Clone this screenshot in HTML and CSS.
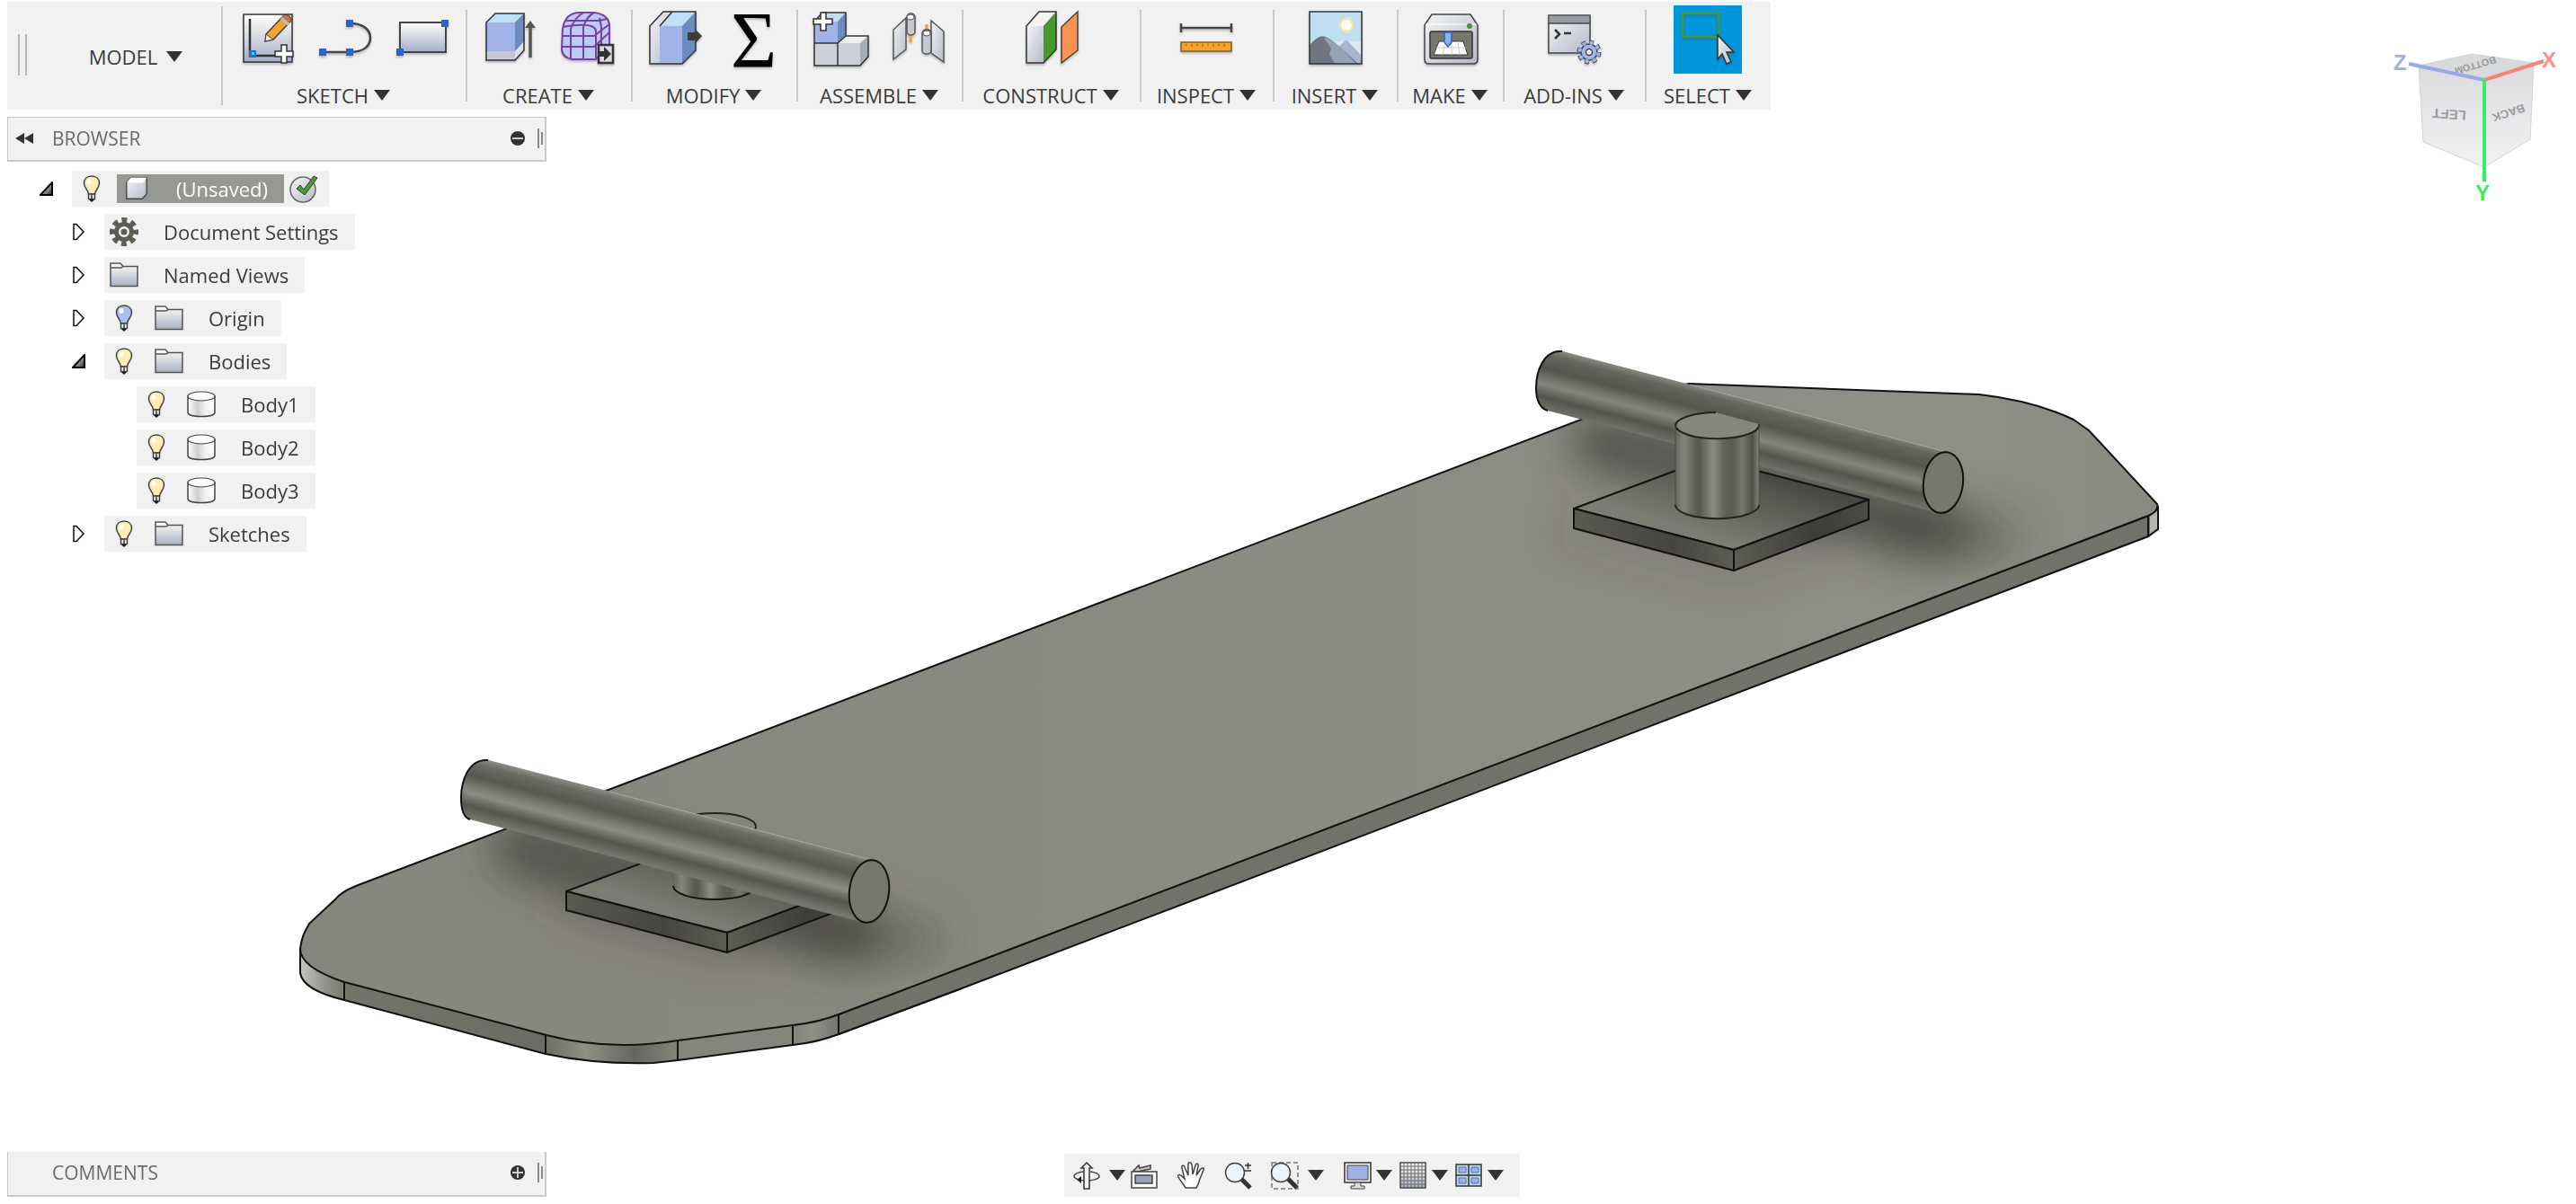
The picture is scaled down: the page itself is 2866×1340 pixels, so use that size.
FILE: index.html
```html
<!DOCTYPE html>
<html lang="en">
<head>
<meta charset="utf-8">
<title>Untitled - Model workspace</title>
<link rel="stylesheet" href="styles.css">
</head>
<body>
<svg class="defs" width="0" height="0" aria-hidden="true">
  <defs>
    <linearGradient id="paper" x1="0" y1="0" x2="0" y2="1"><stop offset="0" stop-color="#fff"/><stop offset=".3" stop-color="#e6e7e9"/><stop offset="1" stop-color="#a4afc4"/></linearGradient>
    <linearGradient id="steel" x1="0" y1="0" x2="1" y2="1"><stop offset="0" stop-color="#f4f5f6"/><stop offset="1" stop-color="#b4bac6"/></linearGradient>
    <linearGradient id="drum" x1="0" y1="0" x2="1" y2="0"><stop offset="0" stop-color="#fff"/><stop offset=".35" stop-color="#cfd0d4"/><stop offset=".7" stop-color="#f6f6f7"/><stop offset="1" stop-color="#fff"/></linearGradient>
    <linearGradient id="wedge" x1="0" y1="0" x2="1" y2="1"><stop offset=".3" stop-color="#ddd"/><stop offset="1" stop-color="#222"/></linearGradient>
    <symbol id="caret" viewBox="0 0 18 12"><path d="M0 0H18L9 12Z" fill="#333"/></symbol>
    <symbol id="bulb" viewBox="0 0 20 32">
      <path d="M10 2C4.500 2 1.500 5.500 1.500 10C1.500 15 6 17 6.500 22H13.500C14 17 18.500 15 18.500 10C18.500 5.500 15.500 2 10 2Z" fill="currentColor" stroke="#444" stroke-width="1.500"/>
      <ellipse cx="7" cy="8" rx="2.500" ry="3" fill="#fff"/>
      <path d="M6.500 22H13.500V27.500H6.500ZM10 22V27" fill="#e8e8ea" stroke="#444" stroke-width="1.500"/>
      <path d="M7 28H13L10 31Z" fill="#111"/>
    </symbol>
    <symbol id="folder" viewBox="0 0 32 28">
      <path d="M1 26.500V1H12L15 4.500H31V26.500Z" fill="url(#paper)" stroke="#555" stroke-width="1.500"/>
      <path d="M1 6H13L15 4.500" fill="none" stroke="#555" stroke-width="1.500"/>
    </symbol>
    <symbol id="body" viewBox="0 0 32 30">
      <path d="M1 6V24C1 27 8 28.500 16 28.500S31 27 31 24V6Z" fill="url(#drum)" stroke="#444" stroke-width="1.500"/>
      <ellipse cx="16" cy="6" rx="15" ry="5" fill="#fff" stroke="#444" stroke-width="1.200"/>
    </symbol>
    <symbol id="open" viewBox="0 0 16 16"><path d="M1 15H14V1Z" fill="url(#wedge)" stroke="#000" stroke-width="2"/></symbol>
    <symbol id="closed" viewBox="0 0 16 20"><path d="M2 1.500H5L13 10L5 18.500H2Z" fill="#fff" stroke="#111" stroke-width="1.500"/></symbol>
  </defs>
</svg>

<main class="viewport">
  <svg class="model" viewBox="0 0 2866 1340" role="img" aria-label="Board with two trucks">
    <defs>
      <linearGradient id="bar1" gradientUnits="userSpaceOnUse" x1="1735" y1="390" x2="1718" y2="456"><stop offset="0" stop-color="#8a8a80"/><stop offset=".12" stop-color="#66655d"/><stop offset=".35" stop-color="#55544d"/><stop offset=".5" stop-color="#74746b"/><stop offset=".6" stop-color="#84857b"/><stop offset=".7" stop-color="#6d6c63"/><stop offset=".8" stop-color="#55544c"/><stop offset="1" stop-color="#727168"/></linearGradient>
      <linearGradient id="bar2" gradientUnits="userSpaceOnUse" x1="540" y1="845" x2="523" y2="911"><stop offset="0" stop-color="#8e8e84"/><stop offset=".12" stop-color="#6b6a62"/><stop offset=".32" stop-color="#585750"/><stop offset=".5" stop-color="#7d7d74"/><stop offset=".6" stop-color="#8b8c82"/><stop offset=".7" stop-color="#6f6e65"/><stop offset=".8" stop-color="#56554d"/><stop offset="1" stop-color="#77766d"/></linearGradient>
      <linearGradient id="post"><stop offset="0" stop-color="#65645c"/><stop offset=".1" stop-color="#84857b"/><stop offset=".28" stop-color="#56554d"/><stop offset=".45" stop-color="#8b8c82"/><stop offset=".58" stop-color="#64635b"/><stop offset=".68" stop-color="#5c5b53"/><stop offset=".8" stop-color="#77776e"/><stop offset=".92" stop-color="#4f4e48"/><stop offset="1" stop-color="#85857b"/></linearGradient>
      <linearGradient id="rim" gradientUnits="userSpaceOnUse" x1="334" y1="0" x2="934" y2="0"><stop offset="0" stop-color="#c4c4c0"/><stop offset=".05" stop-color="#8f8f86"/><stop offset=".09" stop-color="#74736a"/><stop offset=".45" stop-color="#6d6c62"/><stop offset=".53" stop-color="#8f8f85"/><stop offset=".62" stop-color="#67665d"/><stop offset=".7" stop-color="#84847a"/><stop offset=".92" stop-color="#85857b"/><stop offset=".95" stop-color="#8f8f85"/><stop offset="1" stop-color="#75746a"/></linearGradient>
      <linearGradient id="deckTop"><stop offset="0" stop-color="#86867c"/><stop offset=".5" stop-color="#8b8b81"/><stop offset=".9" stop-color="#8f8f85"/><stop offset="1" stop-color="#8a8a80"/></linearGradient>
      <linearGradient id="plateTop" x1="0" y1="1" x2="1" y2="0"><stop offset=".3" stop-color="#7c7c72"/><stop offset=".6" stop-color="#5b5a52"/><stop offset=".8" stop-color="#403f3b"/><stop offset="1" stop-color="#55544d"/></linearGradient>
      <linearGradient id="plateSide"><stop offset="0" stop-color="#5a5952"/><stop offset=".6" stop-color="#45443f"/><stop offset="1" stop-color="#5d5c54"/></linearGradient>
      <linearGradient id="plateSide2"><stop offset="0" stop-color="#5d5c54"/><stop offset=".6" stop-color="#3e3d39"/><stop offset="1" stop-color="#4b4a45"/></linearGradient>
      <filter id="soft" filterUnits="userSpaceOnUse" x="300" y="300" width="2200" height="1000"><feGaussianBlur stdDeviation="24"/></filter>
      <clipPath id="deck"><path d="M334 1056C336 1040 340 1036 344 1028L373 1001Q379 993 396 986L1759 467Q1830 436 1879 427L2202 439Q2263 446 2307 467L2324 479L2400 561Q2402 569 2390 574L1070 1077L933 1129Q910 1138 882 1141L754 1158C700 1167 650 1163 608 1152L383 1093C350 1082 334 1070 334 1056Z"/></clipPath>
    </defs>
    <path d="M334 1056V1083C336 1096 354 1106 383 1113L607 1173Q664 1185 727 1183L754 1180L882 1163Q910 1160 933 1151L1070 1100V1070L608 1120Z" fill="url(#rim)" stroke="#111" stroke-width="2"/>
    <path d="M933 1129L2390 574L2401 565V589L2390 597L1070 1100L933 1151Z" fill="#72716a" stroke="#111" stroke-width="2"/>
    <path d="M334 1056C336 1040 340 1036 344 1028L373 1001Q379 993 396 986L1759 467Q1830 436 1879 427L2202 439Q2263 446 2307 467L2324 479L2400 561Q2402 569 2390 574L1070 1077L933 1129Q910 1138 882 1141L754 1158C700 1167 650 1163 608 1152L383 1093C350 1082 334 1070 334 1056Z" fill="url(#deckTop)" stroke="#111" stroke-width="2"/>
    <path d="M383 1093V1113M607 1152V1173M754 1158V1180M882 1141V1163M933 1129V1151M2390 574V597" fill="none" stroke="#111" stroke-width="2"/>
    <path d="M2392 575L2400 569V588L2392 594Z" fill="#b5b5b0"/>
    <g clip-path="url(#deck)">
      <g filter="url(#soft)" fill="none" stroke="#3e3d38" stroke-linecap="round">
        <path d="M1780 492L2160 590" stroke-width="64" opacity=".75"/>
        <path d="M2110 594L2220 598" stroke-width="56" opacity=".4"/>
        <path d="M580 944L950 1040" stroke-width="64" opacity=".75"/>
        <path d="M910 1046L1025 1046" stroke-width="52" opacity=".35"/>
        <path d="M1751 588L1929 635L2079 578" stroke-width="24" opacity=".3"/>
        <path d="M630 1013L809 1060L959 1004" stroke-width="24" opacity=".3"/>
      </g>
    </g>

    <g stroke="#111" stroke-width="2" stroke-linejoin="round">
      <path d="M1751 566L1901 510L2079 556L1929 612Z" fill="url(#plateTop)"/>
      <path d="M1751 566L1929 612V635L1751 588Z" fill="url(#plateSide)"/>
      <path d="M1929 612L2079 556V578L1929 635Z" fill="url(#plateSide2)"/>
    </g>
    <path d="M1735 390C1717 392 1709 414 1709 432C1709 446 1714 455 1722 457L2157 571L2167 503Z" fill="url(#bar1)"/>
    <path d="M1738 391C1717 389 1709 414 1709 432C1709 446 1714 455 1722 457" fill="none" stroke="#111" stroke-width="2"/>
    <path d="M1880 428L2162 502" stroke="#a3a6ae" stroke-width="1"/>
    <ellipse cx="2162" cy="537" rx="22" ry="34" transform="rotate(7 2162 537)" fill="#77776e" stroke="#111" stroke-width="2"/>
    <path d="M1864 474V562A46 15 0 0 0 1957 562V474Z" fill="url(#post)"/>
    <path d="M1864 474A46 15 0 0 1 1909 459L1957 472A46 15 0 0 1 1864 474Z" fill="#86867b"/>
    <path d="M1909 459A46 15 0 0 0 1864 474A46 15 0 0 0 1957 472M1864 562A46 15 0 0 0 1957 562" fill="none" stroke="#222" stroke-width="2"/>
    <path d="M1864 474V562M1957 472V562" fill="none" stroke="#4a4943" stroke-width="1"/>

    <g stroke="#111" stroke-width="2" stroke-linejoin="round">
      <path d="M630 992L780 936L959 982L809 1038Z" fill="url(#plateTop)"/>
      <path d="M630 992L809 1038V1060L630 1013Z" fill="url(#plateSide)"/>
      <path d="M809 1038L959 982V1004L809 1060Z" fill="url(#plateSide2)"/>
    </g>
    <path d="M749 920V986A46 15 0 0 0 841 986V920Z" fill="url(#post)"/>
    <path d="M749 986A46 15 0 0 0 841 986" fill="none" stroke="#111" stroke-width="2"/>
    <ellipse cx="795" cy="920" rx="46" ry="15" fill="#86867b" stroke="#222" stroke-width="2"/>
    <path d="M540 845C521 848 513 870 513 888C513 902 516 910 523 912L961 1027L972 957Z" fill="url(#bar2)"/>
    <path d="M543 846C521 844 513 870 513 888C513 902 516 910 523 912" fill="none" stroke="#111" stroke-width="2"/>
    <path d="M678 881L966 956" stroke="#a3a6ae" stroke-width="1"/>
    <ellipse cx="967" cy="992" rx="22" ry="35" transform="rotate(7 967 992)" fill="#77776e" stroke="#111" stroke-width="2"/>
  </svg>

  <svg class="viewcube" viewBox="0 0 206 190" role="img" aria-label="View cube">
    <defs>
      <linearGradient id="face" x1="0" y1="0" x2="0" y2="1"><stop offset="0" stop-color="#dcdcdf"/><stop offset="1" stop-color="#f2f2f4"/></linearGradient>
    </defs>
    <g stroke="#d3d3d6" stroke-width="1" stroke-linejoin="round">
      <path d="M41 33L100 20L169 30L114 49Z" fill="#d9dadc"/>
      <path d="M41 33L114 49V146L46 118Z" fill="url(#face)"/>
      <path d="M114 49L169 30L165 115L114 146Z" fill="url(#face)"/>
    </g>
    <g class="cube-text">
      <text x="75" y="88" transform="rotate(184 75 88)" font-size="15" dy="6">LEFT</text>
      <text x="141" y="86" transform="rotate(162 141 86)" font-size="13" dy="5">BACK</text>
      <text x="104" y="33" transform="rotate(164 104 33)" font-size="11" dy="4">BOTTOM</text>
    </g>
    <path d="M114 49L30 31" stroke="#98aae6" stroke-width="4"/>
    <path d="M114 49L180 28" stroke="#f7847c" stroke-width="4"/>
    <path d="M114 48V162" stroke="#35ee62" stroke-width="4"/>
    <g class="axis-text">
      <text x="20" y="38" fill="#9fb1ec">Z</text>
      <text x="186" y="35" fill="#f9958d">X</text>
      <text x="112" y="183" fill="#35ee62">Y</text>
    </g>
  </svg>
</main>

<div class="overlay">
  <header class="toolbar">
    <span class="grip" aria-hidden="true"></span>
    <button class="workspace">MODEL <svg class="caret"><use href="#caret"/></svg></button>
    <section class="group wide">
      <div class="icons">
        <button aria-label="Create sketch"><svg viewBox="0 0 64 64">
          <path d="M7 4H61V57H7Z" fill="url(#paper)" stroke="#333" stroke-width="1.500"/>
          <path d="M14 9V50H44" fill="none" stroke="#333" stroke-width="2.500"/>
          <path d="M13 44H21V52H13Z" fill="#2270d0"/><path d="M16 46h3v3h-3z" fill="#5ac3ff"/>
          <path d="M31 34L32 26L52 5Q59 4 60 11L40 32Z" fill="#f4a32c" stroke="#444" stroke-width="1.500"/>
          <path d="M31 34L32 26L40 32Z" fill="#f8ead8" stroke="#444"/><path d="M49 8L57 15" stroke="#b8bcc4" stroke-width="4"/><path d="M52 5Q59 4 60 11L57 13L50 7Z" fill="#c8733a"/>
          <path d="M49 38H55V45H62V51H55V58H49V51H42V45H49Z" fill="#fff" stroke="#333" stroke-width="1.500"/></svg></button>
        <button aria-label="Line"><svg viewBox="0 0 64 64">
          <path d="M9 46H39C55 46 62 39 62 30S54 14 39 14" fill="none" stroke="#444" stroke-width="2.500"/>
          <path d="M35 10h8v8h-8zM5 42h8v8H5zM35 42h8v8h-8z" fill="#2a66c8"/></svg></button>
        <button aria-label="Rectangle"><svg viewBox="0 0 64 64">
          <path d="M9 13H60V46H9Z" fill="url(#paper)" stroke="#444" stroke-width="2"/>
          <path d="M55 10h8v8h-8zM5 42h8v8H5z" fill="#2a66c8"/></svg></button>
      </div>
      <button class="menu">SKETCH <svg class="caret"><use href="#caret"/></svg></button>
    </section>
    <section class="group">
      <div class="icons">
        <button aria-label="Extrude"><svg viewBox="0 0 64 64">
          <path d="M6 13L16 3H48L38 13Z" fill="#bfe0f5"/><path d="M38 13L48 3V44L38 55Z" fill="#6a8cc0"/><path d="M6 13H38V45H6Z" fill="#a0b2e6"/><path d="M6 45H38V55H6Z" fill="#c3c8d2"/><path d="M38 45L48 34V44L38 55Z" fill="#dcdfe5"/>
          <path d="M6 13L16 3H48V44L38 55H6Z" fill="none" stroke="#333" stroke-width="1.500"/>
          <path d="M55 52V16" stroke="#555" stroke-width="3.500"/><path d="M49 19L55 11L61 19Z" fill="#555"/></svg></button>
        <button aria-label="Create form"><svg viewBox="0 0 64 64">
          <path d="M5 20Q8 2 24 2H40Q56 4 57 16V38L42 54H16Q4 52 4 42Z" fill="#bccbf2"/>
          <path d="M5 20Q8 2 24 2H40Q56 4 57 16V38L42 54H16Q4 52 4 42Z" fill="none" stroke="#7c3fa8" stroke-width="2"/>
          <path d="M4 40H40L57 24M4 28H40L57 15M5 18Q40 12 42 22V54M14 54V20Q18 8 28 2M28 54V18Q32 6 40 2M9 11H46L54 9M48 50V18L46 8" fill="none" stroke="#7c3fa8" stroke-width="2"/>
          <path d="M45 38H61V58H45Z" fill="#d9dadd" stroke="#333" stroke-width="2.500"/><path d="M46 45H51V40L59 48L51 56V51H46Z" fill="#333"/></svg></button>
      </div>
      <button class="menu">CREATE <svg class="caret"><use href="#caret"/></svg></button>
    </section>
    <section class="group">
      <div class="icons">
        <button aria-label="Press pull"><svg viewBox="0 0 64 64">
          <path d="M4 17L19 1H29L15 17V59H4Z" fill="url(#steel)"/><path d="M15 17L29 1H55L40 17Z" fill="#bfe0f5"/><path d="M15 17H40V59H15Z" fill="#a0b2e6"/><path d="M40 17L55 1V44L40 59Z" fill="#6a8cc0"/>
          <path d="M4 17L19 1H55V44L40 59H4ZM15 17L29 1" fill="none" stroke="#333" stroke-width="1.500"/>
          <path d="M46 24H54V20L62 28L54 37V33H46Z" fill="#3c3c3c"/></svg></button>
        <button aria-label="Change parameters"><svg viewBox="0 0 64 64"><text class="sigma" x="8" y="62">Σ</text></svg></button>
      </div>
      <button class="menu">MODIFY <svg class="caret"><use href="#caret"/></svg></button>
    </section>
    <section class="group">
      <div class="icons">
        <button aria-label="New component"><svg viewBox="0 0 64 64">
          <path d="M3 12L12 2H38L29 12Z" fill="#bfe0f5"/><path d="M3 12H29V36H3Z" fill="#a0b2e6"/><path d="M29 12L38 2V28L29 36Z" fill="#6a8cc0"/>
          <path d="M3 36H54V61H3Z" fill="#cdd0d6"/><path d="M29 36L37 28H63L54 36Z" fill="#f0f0f2"/><path d="M54 36L63 28V51L54 61Z" fill="#a9adb8"/>
          <path d="M3 12L12 2H38V28H63V51L54 61H3ZM3 36H29V61M29 36L38 28" fill="none" stroke="#333" stroke-width="1.500"/>
          <path d="M10 2H16V9H23V15H16V22H10V15H2V9H10Z" fill="#fff" stroke="#333" stroke-width="1.500"/></svg></button>
        <button aria-label="Joint"><svg viewBox="0 0 64 64">
          <path d="M24 26V35M42 15V26" stroke="#f4a32c" stroke-width="3"/>
          <g stroke="#555" stroke-width="1.500"><path d="M5 21L19 8V43L5 54Z" fill="url(#steel)"/><path d="M47 11L61 23V57L47 47Z" fill="url(#steel)"/>
          <rect x="20" y="3" width="9" height="24" rx="4" fill="#c3c7cf"/><rect x="37" y="21" width="10" height="27" rx="4" fill="#c3c7cf"/></g>
          <ellipse cx="24" cy="7" rx="4" ry="3" fill="#fff" stroke="#555"/><ellipse cx="42" cy="25" rx="4" ry="3" fill="#fff" stroke="#555"/></svg></button>
      </div>
      <button class="menu">ASSEMBLE <svg class="caret"><use href="#caret"/></svg></button>
    </section>
    <section class="group">
      <div class="icons">
        <button aria-label="Offset plane"><svg viewBox="0 0 64 64">
          <path d="M5 17L19 1H38L24 17Z" fill="#f4f4f5"/><path d="M5 17H24V58H5Z" fill="url(#steel)"/><path d="M24 17L38 1V43L24 58Z" fill="#459a2e"/>
          <path d="M5 17L19 1H38V43L24 58H5Z" fill="none" stroke="#333" stroke-width="1.500"/>
          <path d="M44 18L62 1V44L44 58Z" fill="#fa9352" stroke="#444" stroke-width="1.500"/></svg></button>
      </div>
      <button class="menu">CONSTRUCT <svg class="caret"><use href="#caret"/></svg></button>
    </section>
    <section class="group">
      <div class="icons">
        <button aria-label="Measure"><svg viewBox="0 0 64 64">
          <path d="M4 19H60M4 14V24M60 14V24" stroke="#444" stroke-width="2.500"/>
          <path d="M4 35H60V45H4Z" fill="#f4a32c" stroke="#8a5a1c" stroke-width="1.500"/>
          <path d="M10 37v2M16 37v3M22 37v2M28 37v3M34 37v2M40 37v3M46 37v2M52 37v3" stroke="#8a5a1c"/></svg></button>
      </div>
      <button class="menu">INSPECT <svg class="caret"><use href="#caret"/></svg></button>
    </section>
    <section class="group">
      <div class="icons">
        <button aria-label="Insert image"><svg viewBox="0 0 64 64">
          <path d="M4 1H62V59H4Z" fill="#bfe0f3"/><path d="M4 34H62V59H4Z" fill="#dbe9f4"/><circle cx="45" cy="16" r="7" fill="#fff" stroke="#fbe3a0" stroke-width="2.500"/>
          <path d="M34 42L45 32L62 50V59H40Z" fill="#a9b5cc"/><path d="M4 38Q16 24 24 30Q32 34 58 59H4Z" fill="#6f7682"/><path d="M20 30Q30 30 56 59H32L26 48L28 42Z" fill="#94a2b4"/>
          <path d="M4 1H62V59H4Z" fill="none" stroke="#333" stroke-width="1.500"/></svg></button>
      </div>
      <button class="menu">INSERT <svg class="caret"><use href="#caret"/></svg></button>
    </section>
    <section class="group">
      <div class="icons">
        <button aria-label="3D print"><svg viewBox="0 0 64 64">
          <path d="M4 16L12 4H55L63 16V54Q63 59 58 59H9Q4 59 4 54Z" fill="url(#steel)" stroke="#444" stroke-width="1.500"/>
          <path d="M5 15H62" stroke="#fff"/><circle cx="54" cy="17" r="3" fill="#3e9a2c"/>
          <rect x="10" y="23" width="47" height="30" rx="2" fill="#77776f" stroke="#333" stroke-width="1.500"/>
          <path d="M20 34H47L52 49H14Z" fill="#fff" stroke="#333"/><path d="M17 41H50M27 34L24 49M34 34V49M41 34L43 49" stroke="#ccc"/>
          <path d="M26 24H34V35L30 40L26 35Z" fill="#8fb0ea" stroke="#2a66c8" stroke-width="1.500"/></svg></button>
      </div>
      <button class="menu">MAKE <svg class="caret"><use href="#caret"/></svg></button>
    </section>
    <section class="group">
      <div class="icons">
        <button aria-label="Scripts and add-ins"><svg viewBox="0 0 64 64">
          <path d="M4 5H50V47H4Z" fill="url(#steel)" stroke="#444" stroke-width="1.500"/><path d="M5 6H49V14H5Z" fill="#989ca4"/><path d="M4 14H50" stroke="#444" stroke-width="1.500"/>
          <path d="M11 21L16 26L11 31M21 25H29" fill="none" stroke="#333" stroke-width="2.500"/>
          <circle cx="49" cy="46" r="11" fill="none" stroke="#445" stroke-width="5" stroke-dasharray="4.600 4.040"/>
          <circle cx="49" cy="46" r="9" fill="#a3b8ea" stroke="#445" stroke-width="1.500"/>
          <circle cx="49" cy="46" r="10.500" fill="none" stroke="#a3b8ea" stroke-width="4" stroke-dasharray="3.600 4.647" stroke-dashoffset="-.4"/>
          <circle cx="49" cy="46" r="3.500" fill="#fff" stroke="#445" stroke-width="1.500"/></svg></button>
      </div>
      <button class="menu">ADD-INS <svg class="caret"><use href="#caret"/></svg></button>
    </section>
    <section class="group">
      <div class="icons">
        <button class="active" aria-label="Select"><svg viewBox="0 0 64 64">
          <path d="M4 3H44V29H4Z" fill="none" stroke="#459a2e" stroke-width="2.500"/>
          <path d="M43 27V54L48 48L53 59L58 57L53 46H61Z" fill="url(#steel)" stroke="#333" stroke-width="1.500"/></svg></button>
      </div>
      <button class="menu">SELECT <svg class="caret"><use href="#caret"/></svg></button>
    </section>
  </header>

  <aside class="browser">
    <div class="panel-head">
      <button class="collapse" aria-label="Collapse browser"><svg viewBox="0 0 20 12"><path d="M10 0V12L0 6ZM20 0V12L10 6Z" fill="#333"/></svg></button>
      <h2>BROWSER</h2>
      <button class="toggle" aria-label="Hide browser"><svg viewBox="0 0 16 16"><circle cx="8" cy="8" r="8" fill="#333"/><path d="M2 8H14" stroke="#ccc" stroke-width="2"/></svg></button>
      <span class="panel-grip" aria-hidden="true"></span>
    </div>
    <ul class="tree">
      <li>
        <div class="row"><button class="expander" aria-label="Collapse"><svg class="down"><use href="#open"/></svg></button>
          <div class="item root"><span class="cell"><svg class="bulb"><use href="#bulb"/></svg></span><span class="chosen"><span class="cell"><svg class="folder" viewBox="0 0 30 30"><path d="M3 27V8L8 2H27V21L22 27Z" fill="url(#steel)" stroke="#444" stroke-width="1.500"/><path d="M3 8L8 2H27L22 8Z" fill="#fff"/></svg></span><span class="name">(Unsaved)</span></span><span class="cell"><svg class="check" viewBox="0 0 34 34"><circle cx="16" cy="18" r="14" fill="url(#steel)" stroke="#666" stroke-width="1.500"/><path d="M9 17L13 13L17 18L28 3L32 5L18 24Z" fill="#45a035" stroke="#333" stroke-width="1"/></svg></span></div></div>
        <ul>
          <li><div class="row"><button class="expander" aria-label="Expand"><svg class="right"><use href="#closed"/></svg></button><div class="item"><span class="cell"><svg class="check" viewBox="0 0 34 34"><circle cx="17" cy="17" r="13" fill="none" stroke="#5d5d57" stroke-width="6" stroke-dasharray="5.800 4.410" stroke-dashoffset="2.900"/><circle cx="17" cy="17" r="8.500" fill="none" stroke="#5d5d57" stroke-width="5"/><circle cx="17" cy="17" r="3.500" fill="#5d5d57"/></svg></span><span class="name">Document Settings</span></div></div></li>
          <li><div class="row"><button class="expander" aria-label="Expand"><svg class="right"><use href="#closed"/></svg></button><div class="item"><span class="cell"><svg class="folder"><use href="#folder"/></svg></span><span class="name">Named Views</span></div></div></li>
          <li><div class="row"><button class="expander" aria-label="Expand"><svg class="right"><use href="#closed"/></svg></button><div class="item"><span class="cell"><svg class="bulb off"><use href="#bulb"/></svg></span><span class="cell"><svg class="folder"><use href="#folder"/></svg></span><span class="name">Origin</span></div></div></li>
          <li><div class="row"><button class="expander" aria-label="Collapse"><svg class="down"><use href="#open"/></svg></button><div class="item"><span class="cell"><svg class="bulb"><use href="#bulb"/></svg></span><span class="cell"><svg class="folder"><use href="#folder"/></svg></span><span class="name">Bodies</span></div></div>
            <ul>
              <li><div class="row leaf"><div class="item"><span class="cell"><svg class="bulb"><use href="#bulb"/></svg></span><span class="cell"><svg class="drum"><use href="#body"/></svg></span><span class="name">Body1</span></div></div></li>
              <li><div class="row leaf"><div class="item"><span class="cell"><svg class="bulb"><use href="#bulb"/></svg></span><span class="cell"><svg class="drum"><use href="#body"/></svg></span><span class="name">Body2</span></div></div></li>
              <li><div class="row leaf"><div class="item"><span class="cell"><svg class="bulb"><use href="#bulb"/></svg></span><span class="cell"><svg class="drum"><use href="#body"/></svg></span><span class="name">Body3</span></div></div></li>
            </ul>
          </li>
          <li><div class="row"><button class="expander" aria-label="Expand"><svg class="right"><use href="#closed"/></svg></button><div class="item"><span class="cell"><svg class="bulb"><use href="#bulb"/></svg></span><span class="cell"><svg class="folder"><use href="#folder"/></svg></span><span class="name">Sketches</span></div></div></li>
        </ul>
      </li>
    </ul>
  </aside>

  <footer class="bottom">
    <div class="panel-head comments">
      <span class="collapse"></span>
      <h2>COMMENTS</h2>
      <button class="toggle" aria-label="Show comments"><svg viewBox="0 0 16 16"><circle cx="8" cy="8" r="8" fill="#333"/><path d="M2 8H14M8 2V14" stroke="#ccc" stroke-width="2"/></svg></button>
      <span class="panel-grip" aria-hidden="true"></span>
    </div>
    <nav class="navbar" aria-label="Navigation">
      <div class="tools orbit">
        <button aria-label="Orbit"><svg viewBox="0 0 32 32"><path d="M12 12C5 13 2 15 2 17C2 20 9 22 16 22S30 20 30 17C30 15 26 13 20 12" fill="none" stroke="#444" stroke-width="1.500"/><path d="M13 31V8H10L16 2L22 8H19V31Z" fill="#f4f4f5" stroke="#333" stroke-width="1.500"/><path d="M5 21L10 17V25Z" fill="#222"/></svg></button>
        <button aria-label="Orbit options"><svg class="caret"><use href="#caret"/></svg></button>
      </div>
      <div class="tools views">
        <button aria-label="Look at"><svg viewBox="0 0 32 32"><path d="M4 11L10 5L11 8L23 5V9L8 12Z" fill="#ccc" stroke="#444" stroke-width="1.500"/><path d="M2 12H30V30H2Z" fill="#fff" stroke="#444" stroke-width="1.500"/><path d="M6 16H25V25H6Z" fill="#9aa3b3" stroke="#444" stroke-width="1.500"/></svg></button>
        <button aria-label="Pan"><svg viewBox="0 0 32 32"><path d="M10 30C8 26 4 22 2 18C1 15 4 15 6 17L9 20L6 8C5 5 8 4 9 7L13 16L13 4C13 1 16 1 17 4L18 15L21 5C22 2 25 3 24 6L22 16L27 9C29 7 31 8 30 10L26 20C25 24 24 27 22 30Z" fill="#fff" stroke="#444" stroke-width="1.500"/></svg></button>
        <button aria-label="Zoom"><svg viewBox="0 0 32 32"><path d="M20 20L30 30" stroke="#333" stroke-width="5"/><circle cx="13" cy="13" r="10.500" fill="#eef5fa" stroke="#444" stroke-width="1.500"/><path d="M24 5H31M27.500 2V9M24 11H31" stroke="#333" stroke-width="1.500"/></svg></button>
        <button aria-label="Zoom window"><svg viewBox="0 0 32 32"><path d="M2 2H31V31H2Z" fill="none" stroke="#777" stroke-width="1.500" stroke-dasharray="5 3"/><path d="M20 20L30 30" stroke="#333" stroke-width="5"/><circle cx="12" cy="13" r="10.500" fill="#eef5fa" stroke="#444" stroke-width="1.500"/></svg></button>
      </div>
      <button class="zoom-menu" aria-label="Zoom options"><svg class="caret"><use href="#caret"/></svg></button>
      <div class="tools displays">
        <button aria-label="Display settings"><svg viewBox="0 0 32 32"><path d="M2 2H31V24H2Z" fill="#f4f4f5" stroke="#333" stroke-width="1.500"/><path d="M5 5H28V21H5Z" fill="#9fb0e4" stroke="#444"/><path d="M13 24H20V28H24V31H9V28H13Z" fill="#ddd" stroke="#444"/></svg><svg class="caret"><use href="#caret"/></svg></button>
        <button aria-label="Grid and snaps"><svg viewBox="0 0 32 32"><path d="M2 2H30V30H2Z" fill="url(#paper)" stroke="#444" stroke-width="1.500"/><path d="M6 2V30M10 2V30M14 2V30M18 2V30M22 2V30M26 2V30M2 6H30M2 10H30M2 14H30M2 18H30M2 22H30M2 26H30" stroke="#6a6a66"/></svg><svg class="caret"><use href="#caret"/></svg></button>
        <button aria-label="Viewports"><svg viewBox="0 0 32 32"><path d="M2 4H30V28H2Z" fill="#b9dcf2" stroke="#333" stroke-width="1.500"/><path d="M5 7H13V13H5ZM19 7H27V13H19ZM5 19H13V25H5ZM19 19H27V25H19Z" fill="#9fb0e4" stroke="#5872a8"/><path d="M16 4V28M2 16H30" stroke="#333" stroke-width="1.500"/></svg><svg class="caret"><use href="#caret"/></svg></button>
      </div>
    </nav>
  </footer>
</div>
</body>
</html>
```

FILE: styles.css
```css
* {
  box-sizing: border-box;
}

body {
  margin: 0;
  background: #fff;
  color: #3b3b3b;
  font: 500 22px/30px "Open Sans", "Noto Sans", sans-serif;
}

button {
  margin: 0;
  padding: 0;
  border: 0;
  background: none;
  color: inherit;
  font: inherit;
  cursor: pointer;
}

svg {
  display: block;
}

.defs {
  position: absolute;
}

/* 3D canvas behind the interface */
.viewport {
  position: absolute;
  inset: 0;
  overflow: hidden;
}

.model {
  width: 100%;
  height: 100%;
}

.viewcube {
  position: absolute;
  top: 40px;
  right: 10px;
  width: 206px;
  height: 190px;
}

.cube-text {
  fill: #9a9c9d;
  font-family: "Liberation Sans", sans-serif;
  font-weight: bold;
  text-anchor: middle;
}

.axis-text {
  font: bold 24px "Liberation Sans", sans-serif;
  text-anchor: middle;
}

.overlay {
  position: relative;
  display: flex;
  flex-direction: column;
  align-items: flex-start;
  min-height: 100vh;
  padding: 2px 0 8px 8px;
}

/* Toolbar */
.toolbar {
  display: grid;
  grid-template-columns: 34px 204px 272px 184px 184px 184px 198px 148px 138px 118px 158px 140px;
  height: 120px;
  background: #f1f1f1;
}

.grip {
  width: 10px;
  height: 46px;
  margin: 36px 0 0 12px;
  border: solid #b4b8be;
  border-width: 0 2px;
}

.workspace {
  display: flex;
  align-items: center;
  justify-content: center;
  gap: 10px;
  padding: 2px 0 0 14px;
}

.group {
  display: flex;
  flex-direction: column;
  align-items: center;
  justify-content: space-between;
  padding-top: 4px;
  background: linear-gradient(#c8c9d0, #c8c9d0) 0 9px / 2px 102px no-repeat;
}

.group.wide {
  background-position: 0 5px;
  background-size: 2px 110px;
}

.icons {
  display: flex;
  gap: 22px;
  height: 76px;
  align-items: center;
}

.icons svg {
  width: 64px;
  height: 64px;
  overflow: visible;
  filter: drop-shadow(0 2px 1px rgba(60, 60, 80, .3));
}

.icons .active {
  padding: 6px;
  background: #0096dc;
}

.sigma {
  font: 88px "Liberation Serif", serif;
  fill: #000;
}

.menu {
  display: flex;
  align-items: center;
  gap: 6px;
  height: 30px;
  margin-bottom: 1px;
}

.caret {
  width: 18px;
  height: 12px;
}

/* Panels */
.browser,
.comments {
  width: 600px;
}

.browser {
  margin-top: 8px;
}

.panel-head {
  display: flex;
  align-items: center;
  height: 50px;
  padding-right: 2px;
  padding-bottom: 2px;
  border: solid #c8c9d0;
  border-width: 1px 2px 2px 1px;
  background: #f1f1f1;
}

.panel-head h2 {
  flex: 1;
  margin: 0;
  color: #6b6b66;
  font-size: 21px;
  font-weight: 500;
}

.collapse {
  width: 49px;
  padding-left: 8px;
}

.collapse svg {
  width: 20px;
  height: 12px;
}

.toggle svg {
  width: 16px;
  height: 16px;
}

.panel-grip {
  width: 6px;
  height: 22px;
  margin-left: 14px;
  background:
    linear-gradient(#8a8a86, #8a8a86) 0 0 / 2px 22px no-repeat,
    linear-gradient(#8a8a86, #8a8a86) 4px 4px / 2px 14px no-repeat;
}

/* Browser tree */
.tree {
  padding: 10px 0 0 36px;
}

.tree,
.tree ul {
  margin: 0;
  list-style: none;
}

.tree ul {
  padding-left: 36px;
}

.row {
  display: flex;
  align-items: center;
  height: 40px;
  margin-bottom: 8px;
}

.expander {
  width: 36px;
}

.leaf {
  padding-left: 36px;
}

.down {
  width: 16px;
  height: 16px;
}

.right {
  width: 16px;
  height: 20px;
}

.item {
  display: flex;
  align-items: center;
  gap: 6px;
  height: 40px;
  padding-right: 18px;
  background: #f1f1f1;
}

.item.root {
  padding-right: 6px;
}

.root > .cell:last-child {
  margin-left: -6px;
}

.cell {
  display: flex;
  justify-content: center;
  width: 44px;
}

.name {
  margin-left: 16px;
}

.chosen {
  display: flex;
  align-items: center;
  gap: 6px;
  height: 32px;
  padding-right: 18px;
  background: #969894;
  color: #fff;
}

.bulb {
  width: 20px;
  height: 32px;
  color: #feeeb4;
}

.bulb.off {
  color: #a9bdf0;
}

.folder {
  width: 32px;
  height: 28px;
}

.drum {
  width: 32px;
  height: 30px;
}

.check {
  width: 34px;
  height: 34px;
}

/* Bottom bar */
.bottom {
  display: grid;
  grid-template-columns: 1fr auto 1fr;
  align-items: end;
  align-self: stretch;
  margin-top: auto;
}

.comments {
  border-top: 0;
}

.navbar {
  display: flex;
  align-items: center;
  height: 48px;
  padding: 0 18px 0 9px;
  background: #f1f1f1;
}

.navbar button {
  display: flex;
  align-items: center;
  gap: 5px;
}

.navbar svg:not(.caret) {
  width: 32px;
  height: 32px;
}

.tools {
  display: flex;
  align-items: center;
}

.orbit {
  gap: 9px;
  margin-right: 5px;
}

.views {
  gap: 20px;
}

.zoom-menu {
  margin: 0 21px 0 10px;
}

.displays {
  gap: 7px;
}
```
